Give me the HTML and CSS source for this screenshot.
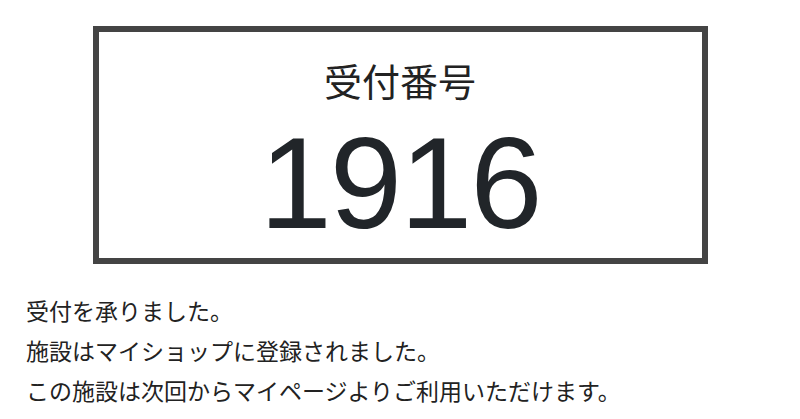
FILE: index.html
```html
<!DOCTYPE html>
<html lang="ja">
<head>
<meta charset="utf-8">
<title>受付番号</title>
<link rel="stylesheet" href="styles.css">
</head>
<body>
<main class="page">
  <section class="ticket">
    <p class="ticket-label">受付番号</p>
    <p class="ticket-number">1916</p>
  </section>
  <div class="messages">
    <p>受付を承りました。</p>
    <p>施設はマイショップに登録されました。</p>
    <p>この施設は次回からマイページよりご利用いただけます。</p>
  </div>
</main>
</body>
</html>
```
FILE: styles.css
```css
html, body {
  margin: 0;
  padding: 0;
  background: #ffffff;
}
body {
  font-family: "Liberation Sans", "Noto Sans CJK JP", sans-serif;
  color: #212529;
}
.page {
  padding: 26px 26px 0;
}
.ticket {
  width: 603px;
  margin: 0 auto;
  border: 6px solid #444444;
  padding: 29px 0 10px;
  text-align: center;
}
.ticket-label {
  margin: 0;
  font-family: "Noto Sans CJK JP", sans-serif;
  font-size: 38px;
  line-height: 1;
  color: #222222;
}
.ticket-number {
  margin: 19px 0 0;
  font-family: "Liberation Sans", "Noto Sans", sans-serif;
  font-size: 130px;
  line-height: 1;
  letter-spacing: -2px;
  color: #212529;
}
.messages {
  margin-top: 26px;
}
.messages p {
  margin: 0;
  font-family: "Noto Sans CJK JP", sans-serif;
  font-size: 23px;
  line-height: 40px;
  color: #222222;
}
```
